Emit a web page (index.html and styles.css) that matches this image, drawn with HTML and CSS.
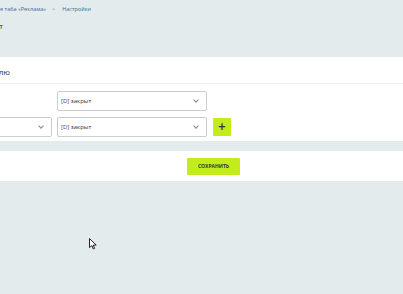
FILE: index.html
```html
<!DOCTYPE html>
<html lang="ru">
  <head>
    <meta charset="UTF-8" />
    <title>Настройки</title>
    <link rel="stylesheet" href="styles.css">
  </head>
  <body>
    <div class="page">
      <div class="crumbs">
        <div class="crumb-lead"><a href="#">Содержимое таба «Реклама»</a></div>
        <span class="crumb-sep">&gt;</span>
        <a href="#">Настройки</a>
      </div>

      <div class="title-row">
        <h1>Настройки. Контент</h1>
      </div>

      <div class="panel">
        <div class="panel-head">
          <div class="panel-title">Доступ по профилю</div>
        </div>

        <div class="form-row">
          <div class="form-lead"></div>
          <div class="select"><span><b>[D]</b> закрыт</span><i class="chev"></i></div>
        </div>

        <div class="form-row">
          <div class="select select-lead"><span>Все пользователи</span><i class="chev"></i></div>
          <div class="select"><span><b>[D]</b> закрыт</span><i class="chev"></i></div>
          <button type="button" class="add">+</button>
        </div>
      </div>

      <div class="panel panel-foot">
        <button type="button" class="save">Сохранить</button>
      </div>
    </div>

    <svg class="cursor" width="8" height="12" viewBox="0 0 8 12">
      <path d="M0.5 0.5 L0.5 9.5 L2.8 7.6 L4.3 11 L5.6 10.4 L4.2 7.1 L7.2 7.1 Z" fill="#fff" stroke="#222" stroke-width="1" />
    </svg>
  </body>
</html>
```

FILE: styles.css
```css
body {
  margin: 0;
  background-color: #e4ebed;
  font-family: "Open Sans", "DejaVu Sans", sans-serif;
  color: #333;
  overflow: hidden;
  height: 294px;
}

.page {
  margin-left: -150px;
  width: 553px;
}

.crumbs {
  display: flex;
  align-items: center;
  height: 16px;
  font-size: 5.5px;
  padding-top: 1px;
}

.crumbs a {
  color: #3e6a9a;
  text-decoration: none;
  white-space: nowrap;
}

.crumb-lead {
  width: 196px;
  display: flex;
  justify-content: flex-end;
}

.crumb-sep {
  color: #7a8a96;
  margin: 0 7px 0 6px;
}

.title-row {
  display: flex;
  justify-content: flex-end;
  width: 153px;
  height: 17px;
  align-items: center;
}

h1 {
  margin: 0;
  font-size: 8px;
  font-weight: 400;
  color: #333;
  white-space: nowrap;
}

.panel {
  background-color: #fff;
  margin-top: 23px;
  padding-bottom: 4px;
}

.panel-head {
  height: 26px;
  border-bottom: 1px solid #eef1f2;
  display: flex;
  align-items: center;
  margin-bottom: 7px;
}

.panel-title {
  width: 160px;
  display: flex;
  justify-content: flex-end;
  font-size: 8px;
  white-space: nowrap;
  color: #333;
  padding-top: 2px;
}

.form-row {
  display: flex;
  align-items: center;
  gap: 5px;
  height: 20px;
  margin-bottom: 6px;
}

.form-row:last-child {
  margin-bottom: 0;
}

.form-lead {
  width: 202px;
}

.select {
  box-sizing: border-box;
  width: 150px;
  height: 20px;
  border: 1px solid #c9cdd0;
  border-radius: 2px;
  display: flex;
  align-items: center;
  justify-content: space-between;
  padding: 0 8px 0 3px;
  font-size: 6px;
  color: #333;
  white-space: nowrap;
}

.select b {
  font-weight: 400;
  color: #5b3c8c;
}

.select-lead {
  width: 202px;
}

.chev {
  width: 3px;
  height: 3px;
  border-right: 1px solid #888;
  border-bottom: 1px solid #888;
  transform: rotate(45deg);
  margin-top: -2px;
}

.add {
  margin-left: 1px;
  width: 18px;
  height: 18px;
  border: none;
  border-radius: 1px;
  background-color: #c3ec1c;
  color: #333;
  font-size: 10px;
  font-weight: 700;
  line-height: 18px;
  padding: 0;
  font-family: "DejaVu Sans", sans-serif;
}

.panel-foot {
  margin-top: 10px;
  height: 30px;
  padding: 0 0 0 174px;
  display: flex;
  align-items: center;
  justify-content: center;
  box-sizing: border-box;
}

.save {
  width: 53px;
  height: 17px;
  border: none;
  border-radius: 1px;
  background-color: #c3ec1c;
  color: #333;
  font-family: "Open Sans", sans-serif;
  font-size: 5px;
  font-weight: 700;
  text-transform: uppercase;
  padding: 0;
}

.cursor {
  position: absolute;
  left: 89px;
  top: 238px;
}
```
